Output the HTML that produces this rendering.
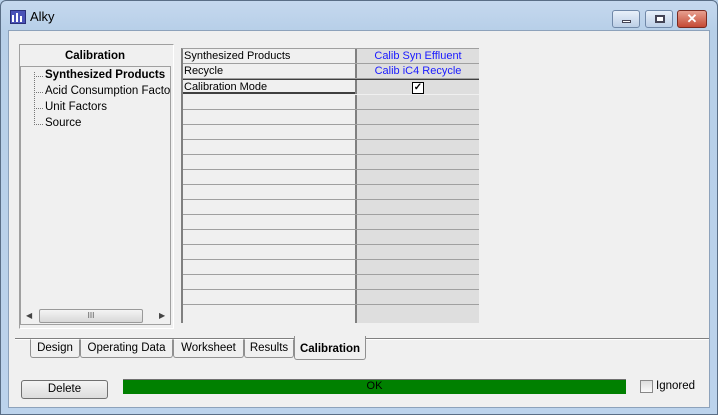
<!DOCTYPE html><html><head><style>
*{margin:0;padding:0;box-sizing:border-box}
body{width:718px;height:415px;overflow:hidden;font-family:"Liberation Sans",Tahoma,sans-serif;font-size:11px;position:relative;background:#b9d1ea}
.a{position:absolute}
.win{left:0;top:0;width:718px;height:415px;border:1px solid #5a6e86;border-radius:6px 6px 0 0;background:linear-gradient(#c5d8ee,#b7cfe8 30px,#bcd3ec)}
.client{left:8px;top:30px;width:702px;height:378px;background:#f0f0f0;border:1px solid #8da2bb}
.grid{left:181px;top:48px;width:298px;height:275px;background:#f0f0f0;border-left:2px solid #808080;border-top:1px solid #a0a0a0}
.row{position:absolute;left:0;width:296px;height:15px;border-bottom:1px solid #a0a0a0}
.c1{position:absolute;left:0;width:172px;height:14px;padding-left:1px;line-height:14px;color:#000}
.c2{position:absolute;left:172px;width:124px;height:14px;background:#dedede;border-left:2px solid #808080;text-align:center;line-height:14px;color:#1a1aff}
.tab{position:absolute;top:339px;height:19px;border:1px solid #909090;border-top:1px solid #fff;border-radius:0 0 3px 3px;background:#f0f0f0;text-align:center;line-height:17px;font-size:11.5px}
</style></head><body>
<div class="a win"></div>
<div class="a" style="left:10px;top:10px;width:16px;height:14px;background:#4a52b8;border:1px solid #2a2f7a"></div>
<div class="a" style="left:12px;top:15px;width:2px;height:7px;background:#fff"></div>
<div class="a" style="left:16px;top:13px;width:2px;height:9px;background:#fff"></div>
<div class="a" style="left:20px;top:16px;width:2px;height:6px;background:#fff"></div>
<div class="a" style="left:30px;top:9px;font-size:13px;color:#000">Alky</div>
<div class="a" style="left:612px;top:10px;width:28px;height:18px;border:1px solid #7088a8;border-radius:3px;background:linear-gradient(#e8f0fa,#bccfe6)"><div class="a" style="left:9px;top:9px;width:9px;height:3px;background:#fff;border:1px solid #445"></div></div>
<div class="a" style="left:645px;top:10px;width:28px;height:18px;border:1px solid #7088a8;border-radius:3px;background:linear-gradient(#e8f0fa,#bccfe6)"><div class="a" style="left:9px;top:4px;width:10px;height:8px;border:2px solid #445;background:#fff"></div></div>
<div class="a" style="left:677px;top:10px;width:30px;height:18px;border:1px solid #7a2a20;border-radius:3px;background:linear-gradient(#e8a090,#c44a35);color:#fff;text-align:center;font-weight:bold;font-size:13px;line-height:16px">✕</div>
<div class="a client"></div>
<div class="a" style="left:19px;top:44px;width:155px;height:285px;border:1px solid #a0a0a0;border-right-color:#fff;border-bottom-color:#fff"></div>
<div class="a" style="left:20px;top:50px;width:150px;text-align:center;font-weight:bold;font-size:11.5px">Calibration</div>
<div class="a" style="left:20px;top:66px;width:151px;height:259px;border:1px solid #a0a0a0;background:#f0f0f0"></div>
<div class="a" style="left:34px;top:72px;width:0;height:53px;border-left:1px dotted #777"></div>
<div class="a" style="left:34px;top:76px;width:9px;border-top:1px dotted #777"></div>
<div class="a" style="left:34px;top:92px;width:9px;border-top:1px dotted #777"></div>
<div class="a" style="left:34px;top:108px;width:9px;border-top:1px dotted #777"></div>
<div class="a" style="left:34px;top:124px;width:9px;border-top:1px dotted #777"></div>
<div class="a" style="left:45px;top:69px;font-weight:bold;font-size:11.5px">Synthesized Products</div>
<div class="a" style="left:45px;top:85px;font-size:11.5px;width:125px;overflow:hidden;white-space:nowrap">Acid Consumption Factor</div>
<div class="a" style="left:45px;top:101px;font-size:11.5px">Unit Factors</div>
<div class="a" style="left:45px;top:117px;font-size:11.5px">Source</div>
<div class="a" style="left:22px;top:308px;width:147px;height:16px;background:#f0f0f0"></div>
<div class="a" style="left:26px;top:311px;font-size:8px;color:#444">◀</div>
<div class="a" style="left:159px;top:311px;font-size:8px;color:#444">▶</div>
<div class="a" style="left:39px;top:309px;width:104px;height:14px;border:1px solid #999;border-radius:2px;background:linear-gradient(#f4f4f4,#d8d8d8);text-align:center;font-size:8px;line-height:12px;color:#555">III</div>
<div class="a grid">
<div class="row" style="top:0"><div class="c1">Synthesized Products</div><div class="c2">Calib Syn Effluent</div></div>
<div class="row" style="top:15px"><div class="c1">Recycle</div><div class="c2">Calib iC4 Recycle</div></div>
<div class="row" style="top:30px;border-top:1px solid #404040;border-bottom:2px solid #404040"><div class="c1">Calibration Mode</div><div class="c2" style="color:#000"><span style="display:inline-block;width:12px;height:12px;border:1px solid #000;background:#fff;line-height:10px;font-size:10px;font-weight:bold;margin-top:0">✓</span></div></div>
<div class="row" style="top:46px"><div class="c2"></div></div>
<div class="row" style="top:61px"><div class="c2"></div></div>
<div class="row" style="top:76px"><div class="c2"></div></div>
<div class="row" style="top:91px"><div class="c2"></div></div>
<div class="row" style="top:106px"><div class="c2"></div></div>
<div class="row" style="top:121px"><div class="c2"></div></div>
<div class="row" style="top:136px"><div class="c2"></div></div>
<div class="row" style="top:151px"><div class="c2"></div></div>
<div class="row" style="top:166px"><div class="c2"></div></div>
<div class="row" style="top:181px"><div class="c2"></div></div>
<div class="row" style="top:196px"><div class="c2"></div></div>
<div class="row" style="top:211px"><div class="c2"></div></div>
<div class="row" style="top:226px"><div class="c2"></div></div>
<div class="row" style="top:241px"><div class="c2"></div></div>
<div class="row" style="top:256px;height:18px;border-bottom:none"><div class="c2" style="height:18px"></div></div>
</div>
<div class="a" style="left:15px;top:338px;width:694px;border-top:1px solid #808080;border-bottom:1px solid #fff;height:2px"></div>
<div class="tab" style="left:30px;width:50px">Design</div>
<div class="tab" style="left:80px;width:93px">Operating Data</div>
<div class="tab" style="left:173px;width:71px">Worksheet</div>
<div class="tab" style="left:244px;width:50px">Results</div>
<div class="tab" style="left:294px;top:336px;width:72px;height:24px;border-top:none;font-weight:bold;line-height:26px">Calibration</div>
<div class="a" style="left:21px;top:380px;width:87px;height:19px;border:1px solid #707070;border-radius:3px;background:linear-gradient(#f4f4f4,#dcdcdc);text-align:center;line-height:17px;font-size:11.5px">Delete</div>
<div class="a" style="left:123px;top:379px;width:503px;height:15px;background:#008000;border-top:1px solid #707070;text-align:center;line-height:13px;font-size:11px;color:#000">OK</div>
<div class="a" style="left:640px;top:380px;width:13px;height:13px;border:1px solid #888;background:linear-gradient(#ddd,#fafafa)"></div>
<div class="a" style="left:656px;top:380px;font-size:11.5px">Ignored</div>
</body></html>
